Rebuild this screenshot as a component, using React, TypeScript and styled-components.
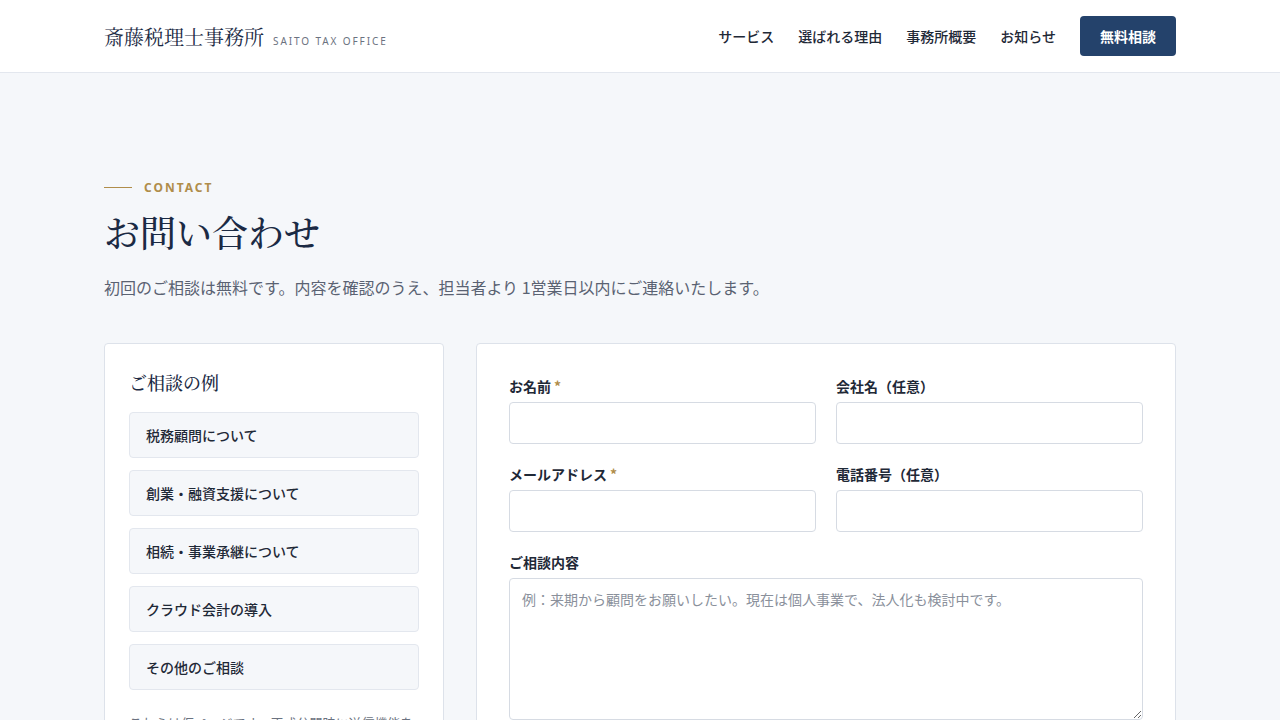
import React from "react";
import styled, { createGlobalStyle } from "styled-components";

const sans = `"Noto Sans CJK JP", "Noto Sans", sans-serif`;
const serif = `"Noto Serif CJK JP", "Liberation Serif", "Noto Sans CJK JP", serif`;

const Global = createGlobalStyle`
  * { box-sizing: border-box; }
  html, body { margin: 0; padding: 0; }
  body {
    font-family: ${sans};
    background: #f5f7fa;
    color: #1f2937;
  }
`;

const Header = styled.header`
  height: 73px;
  background: #ffffff;
  border-bottom: 1px solid #e3e7ee;
`;

const Container = styled.div`
  width: 1072px;
  margin: 0 auto;
`;

const HeaderInner = styled(Container)`
  height: 100%;
  display: flex;
  align-items: center;
  justify-content: space-between;
`;

const Logo = styled.div`
  display: flex;
  align-items: baseline;
  gap: 9px;
`;

const LogoMain = styled.span`
  font-family: ${serif};
  font-size: 20px;
  color: #1b2a44;
`;

const LogoSub = styled.span`
  font-family: "Noto Sans", sans-serif;
  font-size: 10px;
  letter-spacing: 1.9px;
  color: #6b7280;
`;

const Nav = styled.nav`
  display: flex;
  align-items: center;
  gap: 24px;
`;

const NavLink = styled.a`
  font-size: 14px;
  font-weight: 500;
  color: #1f2937;
  text-decoration: none;
`;

const CtaButton = styled.a`
  display: inline-flex;
  align-items: center;
  justify-content: center;
  width: 96px;
  height: 40px;
  background: #24426b;
  color: #ffffff;
  border-radius: 4px;
  font-size: 14px;
  font-weight: 700;
  text-decoration: none;
`;

const Main = styled.main`
  padding-top: 106px;
`;

const Eyebrow = styled.div`
  display: flex;
  align-items: center;
  gap: 12px;
  font-family: "Noto Sans", sans-serif;
  font-size: 12px;
  font-weight: 700;
  letter-spacing: 2px;
  color: #b08d4a;
  &::before {
    content: "";
    width: 28px;
    height: 1px;
    background: #b08d4a;
  }
`;

const Title = styled.h1`
  margin: 11px 0 0;
  font-family: ${serif};
  font-weight: 500;
  font-size: 36px;
  line-height: 1.4;
  color: #1b2a44;
`;

const Lead = styled.p`
  margin: 18px 0 0;
  font-size: 16px;
  color: #5a6272;
  line-height: 1.6;
`;

const Grid = styled.div`
  margin-top: 42px;
  display: grid;
  grid-template-columns: 340px 1fr;
  gap: 32px;
  align-items: start;
`;

const Card = styled.section<{ $pad: number }>`
  background: #ffffff;
  border: 1px solid #dde2ea;
  border-radius: 4px;
  padding: ${(p) => p.$pad}px;
`;

const CardTitle = styled.h2`
  margin: 0 0 16px;
  font-family: ${serif};
  font-weight: 500;
  font-size: 18px;
  line-height: 28px;
  color: #1b2a44;
`;

const TopicList = styled.ul`
  list-style: none;
  margin: 0;
  padding: 0;
  display: flex;
  flex-direction: column;
  gap: 12px;
`;

const Topic = styled.li`
  height: 46px;
  display: flex;
  align-items: center;
  padding: 0 16px;
  background: #f5f7fa;
  border: 1px solid #e3e7ee;
  border-radius: 4px;
  font-size: 14px;
  font-weight: 500;
  color: #1f2937;
`;

const Note = styled.p`
  margin: 22px 0 0;
  font-size: 13px;
  line-height: 1.7;
  color: #6b7280;
`;

const FormGrid = styled.div`
  display: grid;
  grid-template-columns: 1fr 1fr;
  column-gap: 20px;
  row-gap: 20px;
`;

const Field = styled.label<{ $wide?: boolean }>`
  display: flex;
  flex-direction: column;
  gap: 6px;
  grid-column: ${(p) => (p.$wide ? "1 / -1" : "auto")};
`;

const LabelText = styled.span`
  font-size: 14px;
  font-weight: 700;
  line-height: 20px;
  color: #1f2937;
`;

const Req = styled.span`
  color: #b08d4a;
  margin-left: 3px;
`;

const Input = styled.input`
  height: 42px;
  border: 1px solid #d6dbe3;
  border-radius: 4px;
  background: #ffffff;
  padding: 0 12px;
  font-family: ${sans};
  font-size: 14px;
`;

const TextArea = styled.textarea`
  height: 142px;
  border: 1px solid #d6dbe3;
  border-radius: 4px;
  background: #ffffff;
  padding: 9px 12px;
  font-family: ${sans};
  font-size: 14px;
  line-height: 1.6;
  resize: vertical;
  &::placeholder { color: #8a909b; }
`;

const topics = [
  "税務顧問について",
  "創業・融資支援について",
  "相続・事業承継について",
  "クラウド会計の導入",
  "その他のご相談",
];

export default function App() {
  return (
    <>
      <Global />
      <Header>
        <HeaderInner>
          <Logo>
            <LogoMain>斎藤税理士事務所</LogoMain>
            <LogoSub>SAITO TAX OFFICE</LogoSub>
          </Logo>
          <Nav>
            <NavLink href="#">サービス</NavLink>
            <NavLink href="#">選ばれる理由</NavLink>
            <NavLink href="#">事務所概要</NavLink>
            <NavLink href="#">お知らせ</NavLink>
            <CtaButton href="#">無料相談</CtaButton>
          </Nav>
        </HeaderInner>
      </Header>
      <Main>
        <Container>
          <Eyebrow>CONTACT</Eyebrow>
          <Title>お問い合わせ</Title>
          <Lead>初回のご相談は無料です。内容を確認のうえ、担当者より 1営業日以内にご連絡いたします。</Lead>
          <Grid>
            <Card $pad={24}>
              <CardTitle>ご相談の例</CardTitle>
              <TopicList>
                {topics.map((t) => (
                  <Topic key={t}>{t}</Topic>
                ))}
              </TopicList>
              <Note>これらは仮ページです。正式公開時に送信機能を実装します。</Note>
            </Card>
            <Card $pad={32}>
              <FormGrid>
                <Field>
                  <LabelText>
                    お名前<Req>*</Req>
                  </LabelText>
                  <Input type="text" />
                </Field>
                <Field>
                  <LabelText>会社名（任意）</LabelText>
                  <Input type="text" />
                </Field>
                <Field>
                  <LabelText>
                    メールアドレス<Req>*</Req>
                  </LabelText>
                  <Input type="email" />
                </Field>
                <Field>
                  <LabelText>電話番号（任意）</LabelText>
                  <Input type="tel" />
                </Field>
                <Field $wide>
                  <LabelText>ご相談内容</LabelText>
                  <TextArea placeholder="例：来期から顧問をお願いしたい。現在は個人事業で、法人化も検討中です。" />
                </Field>
              </FormGrid>
            </Card>
          </Grid>
        </Container>
      </Main>
    </>
  );
}
